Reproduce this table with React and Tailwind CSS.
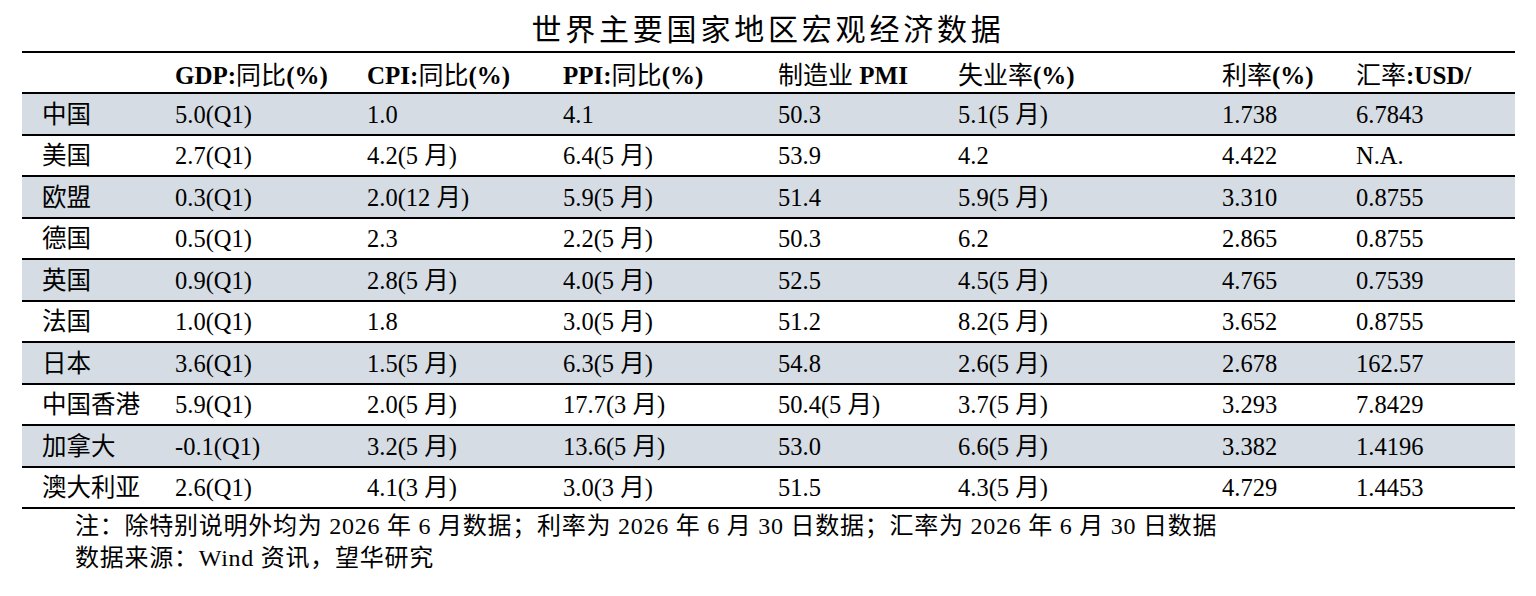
import React from "react";

const COLS = "grid grid-cols-[133px_192px_196px_215px_180px_264px_134px_179px]";

const rows = [
  ["中国", "5.0(Q1)", "1.0", "4.1", "50.3", "5.1(5 月)", "1.738", "6.7843"],
  ["美国", "2.7(Q1)", "4.2(5 月)", "6.4(5 月)", "53.9", "4.2", "4.422", "N.A."],
  ["欧盟", "0.3(Q1)", "2.0(12 月)", "5.9(5 月)", "51.4", "5.9(5 月)", "3.310", "0.8755"],
  ["德国", "0.5(Q1)", "2.3", "2.2(5 月)", "50.3", "6.2", "2.865", "0.8755"],
  ["英国", "0.9(Q1)", "2.8(5 月)", "4.0(5 月)", "52.5", "4.5(5 月)", "4.765", "0.7539"],
  ["法国", "1.0(Q1)", "1.8", "3.0(5 月)", "51.2", "8.2(5 月)", "3.652", "0.8755"],
  ["日本", "3.6(Q1)", "1.5(5 月)", "6.3(5 月)", "54.8", "2.6(5 月)", "2.678", "162.57"],
  ["中国香港", "5.9(Q1)", "2.0(5 月)", "17.7(3 月)", "50.4(5 月)", "3.7(5 月)", "3.293", "7.8429"],
  ["加拿大", "-0.1(Q1)", "3.2(5 月)", "13.6(5 月)", "53.0", "6.6(5 月)", "3.382", "1.4196"],
  ["澳大利亚", "2.6(Q1)", "4.1(3 月)", "3.0(3 月)", "51.5", "4.3(5 月)", "4.729", "1.4453"],
];

export default function App() {
  return (
    <div className="w-[1536px] h-[596px] bg-white text-black font-['Liberation_Serif','Noto_Sans_CJK_SC',serif] overflow-hidden">
      <div className="h-[51px] flex items-center justify-center pt-[8px] text-[30px] tracking-[3.8px] leading-none">
        世界主要国家地区宏观经济数据
      </div>
      <div className="ml-[22px] w-[1493px]">
        <div className={`${COLS} h-[43px] border-t-2 border-b-2 border-black items-center pt-[6px] text-[25px] leading-none`}>
          <div className="pl-5"></div>
          <div className="pl-5 whitespace-nowrap"><b>GDP:</b>同比<b>(%)</b></div>
          <div className="pl-5 whitespace-nowrap"><b>CPI:</b>同比<b>(%)</b></div>
          <div className="pl-5 whitespace-nowrap"><b>PPI:</b>同比<b>(%)</b></div>
          <div className="pl-5 whitespace-nowrap">制造业 <b>PMI</b></div>
          <div className="pl-5 whitespace-nowrap">失业率<b>(%)</b></div>
          <div className="pl-5 whitespace-nowrap">利率<b>(%)</b></div>
          <div className="pl-5 whitespace-nowrap">汇率<b>:USD/</b></div>
        </div>
        {rows.map((r, i) => (
          <div
            key={i}
            className={`${COLS} h-[41.5px] border-b-2 border-black items-center pt-[2px] text-[24.5px] leading-none ${i % 2 === 0 ? "bg-[#d5dce4]" : "bg-white"}`}
          >
            {r.map((c, j) => (
              <div key={j} className="pl-5 whitespace-nowrap">{c}</div>
            ))}
          </div>
        ))}
      </div>
      <div className="ml-[75px] text-[24px] leading-[32px] pt-[1px] tracking-[0.75px]">
        <div className="whitespace-nowrap">注：除特别说明外均为 2026 年 6 月数据；利率为 2026 年 6 月 30 日数据；汇率为 2026 年 6 月 30 日数据</div>
        <div className="whitespace-nowrap">数据来源：Wind 资讯，望华研究</div>
      </div>
    </div>
  );
}
